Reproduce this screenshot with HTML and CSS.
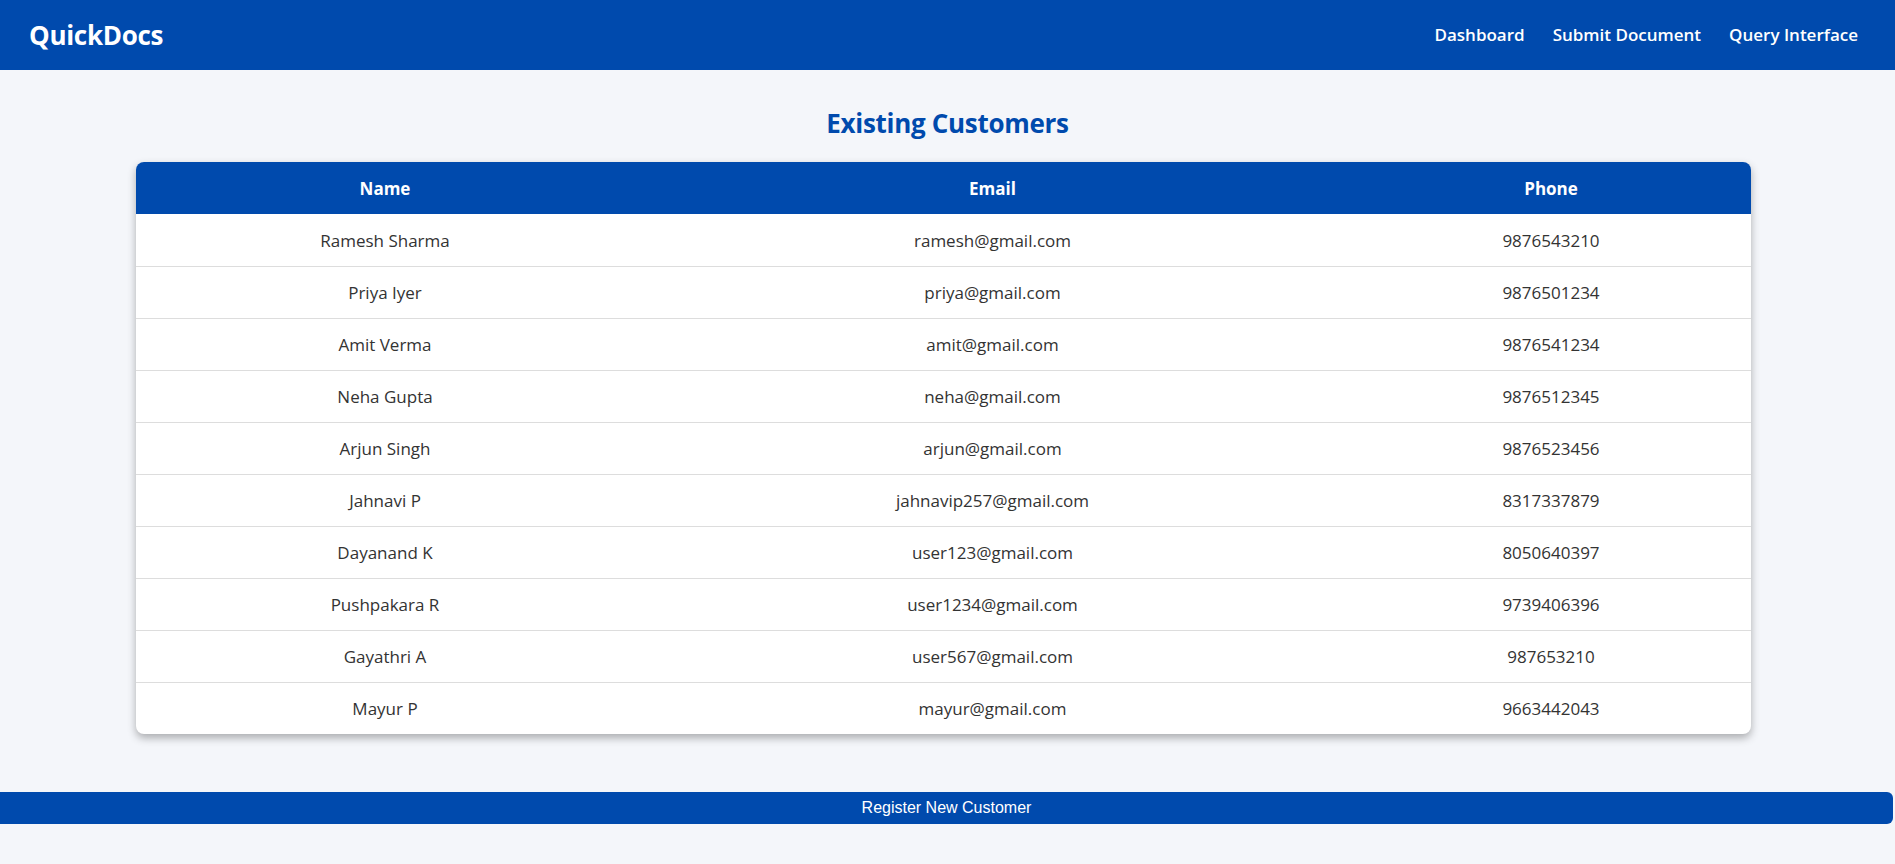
FILE: index.html
```html
<!DOCTYPE html>
<html lang="en">
<head>
<meta charset="utf-8">
<title>QuickDocs - Existing Customers</title>
<link rel="stylesheet" href="styles.css">
</head>
<body>
<header class="topbar">
  <div class="brand">QuickDocs</div>
  <nav class="nav">
    <a href="#">Dashboard</a>
    <a href="#">Submit Document</a>
    <a href="#">Query Interface</a>
  </nav>
</header>
<main class="content">
  <h2 class="title">Existing Customers</h2>
  <div class="table-card">
    <table class="customers">
      <colgroup>
        <col class="col-name">
        <col class="col-email">
        <col class="col-phone">
      </colgroup>
      <thead>
        <tr><th>Name</th><th>Email</th><th>Phone</th></tr>
      </thead>
      <tbody>
        <tr><td>Ramesh Sharma</td><td>ramesh@gmail.com</td><td>9876543210</td></tr>
        <tr><td>Priya Iyer</td><td>priya@gmail.com</td><td>9876501234</td></tr>
        <tr><td>Amit Verma</td><td>amit@gmail.com</td><td>9876541234</td></tr>
        <tr><td>Neha Gupta</td><td>neha@gmail.com</td><td>9876512345</td></tr>
        <tr><td>Arjun Singh</td><td>arjun@gmail.com</td><td>9876523456</td></tr>
        <tr><td>Jahnavi P</td><td>jahnavip257@gmail.com</td><td>8317337879</td></tr>
        <tr><td>Dayanand K</td><td>user123@gmail.com</td><td>8050640397</td></tr>
        <tr><td>Pushpakara R</td><td>user1234@gmail.com</td><td>9739406396</td></tr>
        <tr><td>Gayathri A</td><td>user567@gmail.com</td><td>987653210</td></tr>
        <tr><td>Mayur P</td><td>mayur@gmail.com</td><td>9663442043</td></tr>
      </tbody>
    </table>
  </div>
</main>
<button class="register" type="button">Register New Customer</button>
</body>
</html>
```
FILE: styles.css
```css
html, body {
  margin: 0;
  padding: 0;
}
body {
  background: #f4f6fa;
  font-family: "Open Sans", "Noto Sans", sans-serif;
  color: #333;
  height: 864px;
  overflow: hidden;
}
.topbar {
  height: 70px;
  background: #004aad;
  display: flex;
  align-items: center;
  justify-content: space-between;
  padding: 0 37px 0 29px;
  box-sizing: border-box;
}
.brand {
  color: #fff;
  font-size: 26px;
  font-weight: 700;
  letter-spacing: -0.3px;
}
.nav {
  display: flex;
  gap: 28px;
  margin-top: -2px;
}
.nav a {
  color: #fff;
  text-decoration: none;
  font-size: 17px;
  font-weight: 600;
}
.content {
  padding-top: 36px;
}
.title {
  margin: 0 0 21px;
  text-align: center;
  color: #004aad;
  font-size: 26px;
  font-weight: 700;
  line-height: 35px;
  letter-spacing: -0.3px;
}
.table-card {
  margin-left: 136px;
  width: 1615px;
  background: #fff;
  border-radius: 8px;
  overflow: hidden;
  box-shadow: 0 4px 8px rgba(0, 0, 0, 0.3);
}
.customers {
  width: 100%;
  border-collapse: collapse;
  table-layout: fixed;
}
.col-name { width: 498px; }
.col-email { width: 717px; }
.col-phone { width: 400px; }
.customers th {
  background: #004aad;
  color: #fff;
  font-size: 17px;
  font-weight: 700;
  height: 52px;
  padding: 0;
  text-align: center;
}
.customers td {
  height: 51px;
  padding: 0;
  text-align: center;
  font-size: 17px;
  color: #333;
  border-top: 1px solid #ddd;
}
.customers tbody tr:first-child td {
  border-top: none;
  height: 52px;
}
.register {
  display: block;
  margin-top: 58px;
  width: 1893px;
  height: 32px;
  border: none;
  border-radius: 0 6px 6px 0;
  background: #004aad;
  color: #fff;
  font-family: "Liberation Sans", Arial, sans-serif;
  font-size: 16px;
  padding: 0;
  text-align: center;
}
```
